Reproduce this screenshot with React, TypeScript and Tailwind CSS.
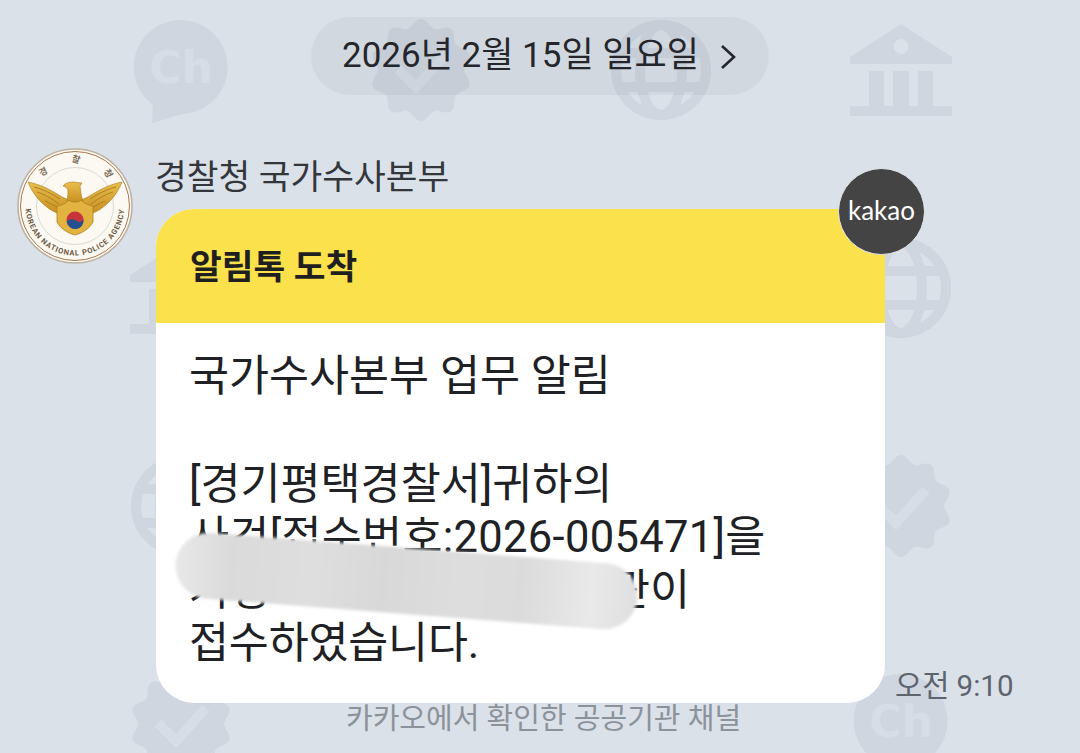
import React from "react";

const FILL = "#cfd6e0";
const MARK = "#d6dde6";

function Ch() {
  return (
    <svg width="100" height="106" viewBox="0 0 100 106" className="block">
      <path d="M50 3a47 47 0 0 1 4 93.800C42 99 30 104 21 106l1-18A47 47 0 0 1 50 3z" fill={FILL} />
      <text x="50" y="66" textAnchor="middle" fontSize="44" fontWeight="700" fill={MARK} fontFamily="'DejaVu Sans', sans-serif">Ch</text>
    </svg>
  );
}

function Badge() {
  const n = 10;
  const pts: string[] = [];
  for (let i = 0; i < 360; i += 3) {
    const a = (i * Math.PI) / 180;
    const r = 47 + 4 * Math.cos(n * a);
    pts.push(`${(51 + r * Math.sin(a)).toFixed(1)},${(51 - r * Math.cos(a)).toFixed(1)}`);
  }
  return (
    <svg width="102" height="102" viewBox="0 0 102 102" className="block">
      <polygon points={pts.join(" ")} fill={FILL} />
      <path d="M28 50l18 18 30-33" fill="none" stroke={MARK} strokeWidth="10" />
    </svg>
  );
}

function Globe() {
  return (
    <svg width="100" height="100" viewBox="0 0 100 100" className="block">
      <g fill="none" stroke={FILL} strokeWidth="10">
        <circle cx="50" cy="50" r="45" />
        <ellipse cx="50" cy="50" rx="21" ry="45" />
        <path d="M8 33h84M8 67h84" />
      </g>
    </svg>
  );
}

function Bank() {
  return (
    <svg width="102" height="92" viewBox="0 0 102 92" className="block">
      <path fillRule="evenodd" d="M51 0l51 33v7H0v-7zM51 15a7.500 7.500 0 1 0 .01 0z" fill={FILL} />
      <path d="M19 47h15v35H19zM43 47h16v35H43zM68 47h15v35H68zM0 82h102v10H0z" fill={FILL} />
    </svg>
  );
}

function Wing() {
  return (
    <g>
      <path d="M11 34c6 1 11 3 16 5 7 3 13 7 18 10l7 3 2 12-14 1c-5-2-11-6-16-11-5-5-10-12-13-20z" fill="url(#gold)" stroke="#a97a1f" strokeWidth="0.600" />
      <path d="M20 44c7 2 14 6 22 12M17 39c8 2 17 6 26 12M28 53c5 2 10 5 15 8" fill="none" stroke="#9f741d" strokeWidth="0.800" />
    </g>
  );
}

function Emblem() {
  return (
    <svg width="116" height="116" viewBox="0 0 116 116" className="block">
      <defs>
        <path id="bottomArc" d="M8.500 58a49.500 49.500 0 0 0 99 0" />
        <path id="topArc" d="M16 58a42 42 0 0 1 84 0" />
        <linearGradient id="gold" x1="0" y1="0" x2="0" y2="1">
          <stop offset="0" stopColor="#e9bf4c" />
          <stop offset="1" stopColor="#c98f22" />
        </linearGradient>
      </defs>
      <circle cx="58" cy="58" r="57" fill="#fbf9f2" stroke="#bcb0a0" strokeWidth="1.500" />
      <circle cx="58" cy="58" r="54.500" fill="none" stroke="#a9764f" strokeWidth="1" />
      <circle cx="58" cy="58" r="38.500" fill="none" stroke="#d8dad6" strokeWidth="1" />
      <text fontSize="7.500" fontWeight="700" fill="#6d5a45" fontFamily="Roboto, sans-serif" letterSpacing="0.800">
        <textPath href="#bottomArc" startOffset="50%" textAnchor="middle">KOREAN NATIONAL POLICE AGENCY</textPath>
      </text>
      <text fontSize="9" fontWeight="700" fill="#7a6a55" fontFamily="'Noto Sans CJK KR', sans-serif" letterSpacing="24">
        <textPath href="#topArc" startOffset="59%" textAnchor="middle">경찰청</textPath>
      </text>
      <Wing />
      <g transform="matrix(-1 0 0 1 116 0)"><Wing /></g>
      <path d="M46 38c2-3 6-4 10-4l9 1-2 3 1 8 2 8H50l1-9c0-4-1-6-5-7z" fill="url(#gold)" stroke="#a97a1f" strokeWidth="0.600" />
      <path d="M40 58c6-1 9-3 12-6 2 2 4 2 6 2s4 0 6-2c3 3 6 5 12 6v16c-3 6-10 11-18 13-8-2-15-7-18-13z" fill="#e2b341" stroke="#ad801f" strokeWidth="0.800" />
      <circle cx="58" cy="72" r="8.500" fill="#c8343c" />
      <path d="M49.700 74a8.500 8.500 0 0 0 16.800-3c-1 2.500-3.500 4-6 2.500-2.500-1.500-4.500-2.500-7-2-1.800.3-3 1-3.800 2.500z" fill="#24508f" />
    </svg>
  );
}

export default function App() {
  const sans = "[font-family:Roboto,'Noto_Sans_CJK_KR',sans-serif]";
  return (
    <div className={`relative h-[753px] w-[1080px] overflow-hidden bg-[#dbe1e9] ${sans}`}>
      {/* wallpaper pattern */}
      <div className="absolute left-[61px] top-[-39px] grid grid-cols-[repeat(4,240px)] grid-rows-[repeat(4,218px)] place-items-center">
        <Ch /><Badge /><Globe /><Bank />
        <Bank /><div /><div /><Globe />
        <Globe /><div /><div /><Badge />
        <Badge /><div /><div /><Ch />
      </div>

      <div className="relative flex flex-col">
        {/* date pill */}
        <div className="flex justify-center pt-[17px]">
          <div className="flex h-[78px] w-[458px] items-center gap-[21px] rounded-full bg-black/[0.04] pl-[31px] pt-[1px] text-[35px] text-[#24262b]">
            <span className="whitespace-nowrap">2026년 2월 15일 일요일</span>
            <svg width="16" height="26" viewBox="0 0 16 26" fill="none" stroke="#24262b" strokeWidth="2.600">
              <path d="M2 2l12 11L2 24" />
            </svg>
          </div>
        </div>

        <div className="flex pl-[17px] pt-[53px]">
          <div className="shrink-0"><Emblem /></div>

          <div className="ml-[22px] flex flex-col">
            <div className="h-[61px] pt-[6px] text-[34.500px] leading-[46px] text-[#33363b] whitespace-nowrap">경찰청 국가수사본부</div>

            <div className="flex items-end">
              {/* bubble */}
              <div className="relative ml-[1px] h-[494px] w-[729px]">
                <div className="h-full overflow-hidden rounded-[38px] bg-white">
                  <div className="flex h-[114px] items-center bg-[#fbe14b] pl-[34px] pt-[3px] text-[34.500px] font-bold text-[#1f1f1f]">
                    알림톡 도착
                  </div>
                  <div className="pl-[33px] pt-[27px] text-[43.500px] text-[#202124]">
                    <p className="h-[54px] leading-[53px]">국가수사본부 업무 알림</p>
                    <p className="h-[54px]"></p>
                    <p className="h-[53px] leading-[53px]">[경기평택경찰서]귀하의</p>
                    <p className="h-[53px] whitespace-nowrap leading-[53px] tracking-[0.3px]">사건[접수번호:2026-005471]을</p>
                    <p className="flex h-[53px] leading-[53px]"><span>거행</span><span className="ml-[341px]">관이</span></p>
                    <p className="h-[53px] leading-[53px] tracking-[-0.2px]">접수하였습니다.</p>
                  </div>
                </div>

                {/* redaction smear */}
                <div className="absolute left-[19px] top-[339px] h-[66px] w-[463px] rotate-[4.400deg] rounded-[33px] bg-[linear-gradient(90deg,#e8e8e8_0%,#dadada_12%,#dedede_30%,#d8d8d8_45%,#dddddd_62%,#dbdbdb_75%,#e9e9e9_90%,#dfdfdf_100%)] blur-[1.500px]"></div>

                {/* kakao badge */}
                <div className="absolute right-[-40px] top-[-41px] flex h-[87px] w-[87px] items-center justify-center rounded-full border border-[#e5e7ea] bg-[#444444] pb-[2px] [font-family:Lato,sans-serif] text-[26px] text-white">
                  kakao
                </div>
              </div>

              <div className="ml-[10px] whitespace-nowrap text-[29.500px] leading-[34px] text-[#5d646d]">오전 9:10</div>
            </div>

            <div className="pl-[191px] text-[29px] leading-[32px] text-[#8c929a]">
              <span className="whitespace-nowrap">카카오에서 확인한 공공기관 채널</span>
            </div>
          </div>
        </div>
      </div>
    </div>
  );
}
